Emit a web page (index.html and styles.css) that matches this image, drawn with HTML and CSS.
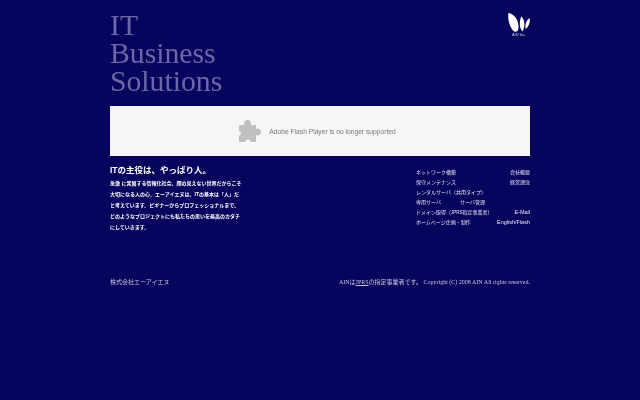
FILE: index.html
```html
<!DOCTYPE html>
<html lang="ja">
<head>
    <meta charset="UTF-8">
    <meta name="viewport" content="width=device-width, initial-scale=1.0">
    <title>IT Business Solutions</title>
    <link rel="stylesheet" href="styles.css">
</head>
<body>
    <div class="page">
        <header class="header">
            <h1 class="title">IT<br>Business<br>Solutions</h1>
            <div class="logo">
                <svg width="22" height="20" viewBox="0 0 22 20">
                    <path d="M0.500 0 C6 1 11 7 10.500 14.500 C10.300 19 7.500 20 5 17.500 C1.500 13.500 -0.500 6 0.500 0 Z" fill="#fff"/>
                    <path d="M13.500 3.500 C16.800 7 17.500 13 14.500 18.500 C11.500 16 10.800 8 13.500 3.500 Z" fill="#fff"/>
                    <path d="M21.500 5 C22.500 9 21 13 17.800 16 C16.500 12 18 8 21.500 5 Z" fill="#fff"/>
                </svg>
                <span class="logo-text">AIN Inc.</span>
            </div>
        </header>

        <div class="flash">
            <svg class="puzzle" width="22" height="22" viewBox="0 0 22 22">
                <path d="M0 5 H5.500 C4.500 2.500 5.500 0 8.500 0 C11.500 0 12.500 2.500 11.500 5 H17 V9 C19 8 22 9 22 12 C22 15 19 16 17 15 V22 H11.500 C12 20.500 10.500 19.500 9 19.500 C7.500 19.500 6 20.500 6.500 22 H0 V15.500 C1 16 2 15 2 13.500 C2 12 1 11 0 11.500 Z" fill="#c0c0c0"/>
            </svg>
            <span class="flash-text">Adobe Flash Player is no longer supported</span>
        </div>

        <main class="content">
            <section class="intro">
                <h2 class="intro-title">ITの主役は、やっぱり人。</h2>
                <p class="intro-text">急激 に発展する情報化社会、顔の見えない世界だからこそ<br>大切になる人の心。エーアイエヌは、ITの基本は「人」だ<br>と考えています。ビギナーからプロフェッショナルまで、<br>どのようなプロジェクトにも私たちの思いを最高のカタチ<br>にしていきます。</p>
            </section>
            <nav class="menu">
                <div class="menu-row"><a>ネットワーク構築</a><a>会社概要</a></div>
                <div class="menu-row"><a>保守メンテナンス</a><a>経営理念</a></div>
                <div class="menu-row"><a>レンタルサーバ（共用タイプ）</a></div>
                <div class="menu-row menu-row-start"><a>専用サーバ</a><a>サーバ管理</a></div>
                <div class="menu-row"><a>ドメイン取得（<span class="small">JPRS</span>指定事業者）</a><a class="latin">E-Mail</a></div>
                <div class="menu-row"><a>ホームページ企画・制作</a><a class="latin">English/Flash</a></div>
            </nav>
        </main>

        <footer class="footer">
            <span class="company">株式会社エーアイエヌ</span>
            <span class="copyright">AINは<u>JPRS</u>の指定事業者です。 Copyright (C) 2008 AIN All rights reserved.</span>
        </footer>
    </div>
</body>
</html>
```

FILE: styles.css
```css
body {
    margin: 0;
    background: #07045e;
    color: #fff;
    font-family: "Liberation Sans", "Noto Sans CJK JP", sans-serif;
}

.page {
    width: 420px;
    margin: 0 auto;
    will-change: transform;
}

.header {
    display: flex;
    justify-content: space-between;
    height: 106px;
}

.title {
    margin: 0;
    padding-top: 11px;
    font-family: "Liberation Serif", serif;
    font-size: 29.700px;
    font-weight: normal;
    line-height: 28px;
    color: #6a68a8;
}

.logo {
    display: flex;
    flex-direction: column;
    align-items: center;
    padding-top: 13px;
}

.logo-text {
    font-size: 4px;
    line-height: 4px;
    color: #ccd;
}

.flash {
    display: flex;
    align-items: center;
    justify-content: center;
    gap: 8px;
    height: 50px;
    padding-right: 5px;
    background: #f6f6f6;
}

.flash-text {
    font-size: 6.700px;
    color: #777;
}

.content {
    display: flex;
    justify-content: space-between;
    height: 112px;
    padding-top: 9px;
}

.intro {
    width: 140px;
}

.intro-title {
    margin: 0;
    font-size: 8.500px;
    font-weight: bold;
    line-height: 11px;
}

.intro-text {
    margin: 2px 0 0;
    font-size: 5px;
    font-weight: bold;
    line-height: 11px;
    white-space: nowrap;
}

.menu {
    width: 114px;
    padding-top: 2px;
    font-size: 5px;
    line-height: 10px;
    color: #e4e4f0;
}

.menu-row {
    display: flex;
    justify-content: space-between;
    height: 10px;
}

.menu-row-start {
    justify-content: flex-start;
    gap: 19px;
}

.small {
    font-size: 4.500px;
}

.latin {
    font-size: 5.500px;
}

.footer {
    display: flex;
    justify-content: space-between;
    font-size: 6px;
    line-height: 10px;
    color: #c4c4dc;
}

.copyright {
    font-family: "Liberation Serif", "Noto Sans CJK JP", serif;
}
```
